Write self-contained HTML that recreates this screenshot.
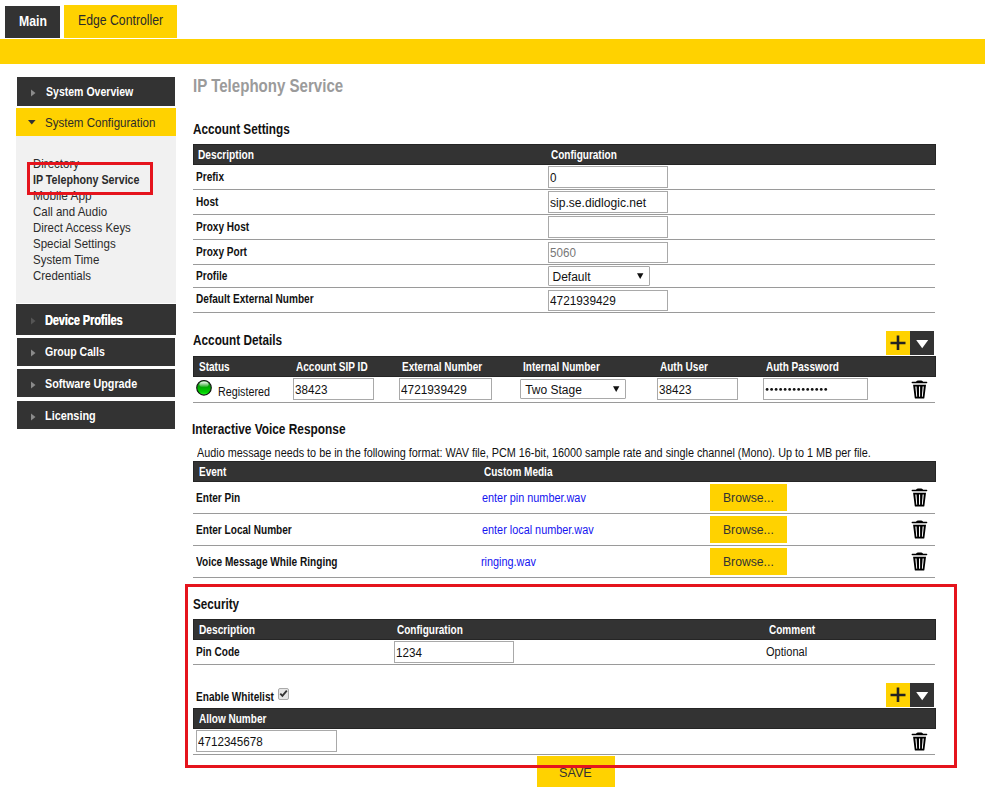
<!DOCTYPE html>
<html><head><meta charset="utf-8"><title>IP Telephony Service</title>
<style>
html,body{margin:0;padding:0;background:#fff;}
body{width:985px;height:797px;position:relative;overflow:hidden;font-family:"Liberation Sans",sans-serif;}
.r{position:absolute;}
.t{position:absolute;white-space:nowrap;transform-origin:0 0;}
</style></head><body>
<div class="r" style="left:5px;top:6px;width:55px;height:32px;background:#333333;"></div>
<div class="t" style="left:18.73px;top:14px;font-size:14px;line-height:14px;font-weight:bold;color:#fff;transform:scaleX(0.8760);">Main</div>
<div class="r" style="left:64px;top:5px;width:113px;height:33px;background:#ffd200;"></div>
<div class="t" style="left:77.62px;top:12.5px;font-size:14px;line-height:14px;color:#2b2b2b;transform:scaleX(0.8750);">Edge Controller</div>
<div class="r" style="left:0px;top:39px;width:985px;height:25px;background:#ffd200;"></div>
<div class="r" style="left:17px;top:77px;width:158px;height:29px;background:#333333;"></div>
<svg class="r" style="left:31px;top:88.7px" width="5" height="8" viewBox="0 0 5 8"><path d="M0 0.5L4.5 4L0 7.5Z" fill="#8a8a8a"/></svg>
<div class="t" style="left:45.7px;top:85.3px;font-size:13px;line-height:13px;font-weight:bold;color:#fff;transform:scaleX(0.8102);">System Overview</div>
<div class="r" style="left:16px;top:108px;width:160px;height:28px;background:#ffd200;"></div>
<svg class="r" style="left:27.8px;top:120.3px" width="8" height="5" viewBox="0 0 8 5"><path d="M0 0H7.6L3.8 4.6Z" fill="#333"/></svg>
<div class="t" style="left:44.75px;top:116px;font-size:13px;line-height:13px;color:#2b2b2b;transform:scaleX(0.8880);">System Configuration</div>
<div class="r" style="left:16px;top:136px;width:160px;height:166.5px;background:#f1f1f1;"></div>
<div class="t" style="left:32.62px;top:157px;font-size:13px;line-height:13px;color:#2b2b2b;transform:scaleX(0.8843);">Directory</div>
<div class="t" style="left:32.78px;top:173px;font-size:13px;line-height:13px;font-weight:bold;color:#2b2b2b;transform:scaleX(0.8218);">IP Telephony Service</div>
<div class="t" style="left:32.59px;top:189px;font-size:13px;line-height:13px;color:#2b2b2b;transform:scaleX(0.9113);">Mobile App</div>
<div class="t" style="left:32.95px;top:205px;font-size:13px;line-height:13px;color:#2b2b2b;transform:scaleX(0.8834);">Call and Audio</div>
<div class="t" style="left:32.62px;top:221px;font-size:13px;line-height:13px;color:#2b2b2b;transform:scaleX(0.8793);">Direct Access Keys</div>
<div class="t" style="left:32.95px;top:237px;font-size:13px;line-height:13px;color:#2b2b2b;transform:scaleX(0.8868);">Special Settings</div>
<div class="t" style="left:32.95px;top:253px;font-size:13px;line-height:13px;color:#2b2b2b;transform:scaleX(0.8826);">System Time</div>
<div class="t" style="left:32.95px;top:269px;font-size:13px;line-height:13px;color:#2b2b2b;transform:scaleX(0.8820);">Credentials</div>
<div class="r" style="left:16px;top:304px;width:160px;height:30.5px;background:#333333;"></div>
<svg class="r" style="left:31px;top:316.5px" width="5" height="8" viewBox="0 0 5 8"><path d="M0 0.5L4.5 4L0 7.5Z" fill="#555"/></svg>
<div class="t" style="left:45.02px;top:313px;font-size:14px;line-height:14px;font-weight:bold;color:#fff;transform:scaleX(0.7717);text-shadow:0.3px 0 0 #fff;">Device Profiles</div>
<div class="r" style="left:17px;top:337.5px;width:158px;height:28px;background:#333333;"></div>
<svg class="r" style="left:31px;top:349px" width="5" height="8" viewBox="0 0 5 8"><path d="M0 0.5L4.5 4L0 7.5Z" fill="#8a8a8a"/></svg>
<div class="t" style="left:45.29px;top:344.8px;font-size:13px;line-height:13px;font-weight:bold;color:#fff;transform:scaleX(0.8124);">Group Calls</div>
<div class="r" style="left:17px;top:369.3px;width:158px;height:28px;background:#333333;"></div>
<svg class="r" style="left:31px;top:380.8px" width="5" height="8" viewBox="0 0 5 8"><path d="M0 0.5L4.5 4L0 7.5Z" fill="#8a8a8a"/></svg>
<div class="t" style="left:45.39px;top:376.9px;font-size:13px;line-height:13px;font-weight:bold;color:#fff;transform:scaleX(0.8281);">Software Upgrade</div>
<div class="r" style="left:17px;top:401.3px;width:158px;height:28px;background:#333333;"></div>
<svg class="r" style="left:31px;top:412.8px" width="5" height="8" viewBox="0 0 5 8"><path d="M0 0.5L4.5 4L0 7.5Z" fill="#8a8a8a"/></svg>
<div class="t" style="left:44.97px;top:408.8px;font-size:13px;line-height:13px;font-weight:bold;color:#fff;transform:scaleX(0.8356);">Licensing</div>
<div class="r" style="left:27px;top:162px;width:126px;height:33px;box-sizing:border-box;border:3px solid #e5141d"></div>
<div class="t" style="left:193.01px;top:76px;font-size:19px;line-height:19px;font-weight:bold;color:#9b9b9b;transform:scaleX(0.7931);">IP Telephony Service</div>
<div class="t" style="left:192.68px;top:121.7px;font-size:14px;line-height:14px;font-weight:bold;color:#111;transform:scaleX(0.8403);">Account Settings</div>
<div class="r" style="left:193px;top:144px;width:743px;height:21px;background:#333333;box-shadow:inset 0 0 0 1px #252525;"></div>
<div class="t" style="left:198.36px;top:149.2px;font-size:12px;line-height:12px;font-weight:bold;color:#fff;transform:scaleX(0.8481);">Description</div>
<div class="t" style="left:550.68px;top:149px;font-size:12px;line-height:12px;font-weight:bold;color:#fff;transform:scaleX(0.8361);">Configuration</div>
<div class="t" style="left:195.67px;top:171px;font-size:12px;line-height:12px;font-weight:bold;color:#111;transform:scaleX(0.8400);">Prefix</div>
<div class="r" style="left:193px;top:189px;width:742px;height:1px;background:#9a9a9a;"></div>
<div class="t" style="left:195.67px;top:195.8px;font-size:12px;line-height:12px;font-weight:bold;color:#111;transform:scaleX(0.8400);">Host</div>
<div class="r" style="left:193px;top:214px;width:742px;height:1px;background:#9a9a9a;"></div>
<div class="t" style="left:195.67px;top:220.6px;font-size:12px;line-height:12px;font-weight:bold;color:#111;transform:scaleX(0.8400);">Proxy Host</div>
<div class="r" style="left:193px;top:239px;width:742px;height:1px;background:#9a9a9a;"></div>
<div class="t" style="left:195.67px;top:245.7px;font-size:12px;line-height:12px;font-weight:bold;color:#111;transform:scaleX(0.8400);">Proxy Port</div>
<div class="r" style="left:193px;top:264px;width:742px;height:1px;background:#9a9a9a;"></div>
<div class="t" style="left:195.67px;top:269.6px;font-size:12px;line-height:12px;font-weight:bold;color:#111;transform:scaleX(0.8400);">Profile</div>
<div class="r" style="left:193px;top:287px;width:742px;height:1px;background:#9a9a9a;"></div>
<div class="t" style="left:195.67px;top:293.4px;font-size:12px;line-height:12px;font-weight:bold;color:#111;transform:scaleX(0.8400);">Default External Number</div>
<div class="r" style="left:193px;top:312px;width:742px;height:1px;background:#9a9a9a;"></div>
<div class="r" style="left:548px;top:166px;width:120px;height:22px;box-sizing:border-box;border:1px solid #a9a9a9;background:#fff"></div>
<div class="t" style="left:550.01px;top:171.5px;font-size:12px;line-height:12px;color:#111;transform:scaleX(0.9700);">0</div>
<div class="r" style="left:548px;top:191px;width:120px;height:22px;box-sizing:border-box;border:1px solid #a9a9a9;background:#fff"></div>
<div class="t" style="left:550.32px;top:196.5px;font-size:12px;line-height:12px;color:#111;transform:scaleX(1.0076);">sip.se.didlogic.net</div>
<div class="r" style="left:548px;top:216px;width:120px;height:22px;box-sizing:border-box;border:1px solid #a9a9a9;background:#fff"></div>
<div class="r" style="left:548px;top:241.5px;width:120px;height:21px;box-sizing:border-box;border:1px solid #a9a9a9;background:#fff"></div>
<div class="t" style="left:550.01px;top:246.5px;font-size:12px;line-height:12px;color:#777;transform:scaleX(0.9700);">5060</div>
<div class="r" style="left:548px;top:266px;width:102px;height:20px;box-sizing:border-box;border:1px solid #a9a9a9;border-radius:1px;background:#fff"></div>
<div class="t" style="left:552.5px;top:271px;font-size:12px;line-height:12px;color:#111;">Default</div>
<svg class="r" style="left:637.2px;top:272.8px" width="7" height="7" viewBox="0 0 7 7"><path d="M0 0.3H6.4L3.2 6.1Z" fill="#111"/></svg>
<div class="r" style="left:548px;top:289.5px;width:120px;height:21.5px;box-sizing:border-box;border:1px solid #a9a9a9;background:#fff"></div>
<div class="t" style="left:549.95px;top:294.6px;font-size:12px;line-height:12px;color:#111;transform:scaleX(0.9848);">4721939429</div>
<div class="t" style="left:192.68px;top:333px;font-size:14px;line-height:14px;font-weight:bold;color:#111;transform:scaleX(0.8429);">Account Details</div>
<div class="r" style="left:886px;top:331px;width:24px;height:24px;background:#ffd200;"></div>
<div class="r" style="left:910px;top:331px;width:24px;height:24px;background:#333;"></div>
<svg class="r" style="left:886px;top:331px" width="48" height="24" viewBox="0 0 48 24"><path d="M4.5 12H19.5M12 4.5V19" stroke="#222" stroke-width="2.6"/><path d="M30.2 9H42.2L36.2 17.3Z" fill="#fff"/></svg>
<div class="r" style="left:193px;top:356px;width:743px;height:21px;background:#333333;box-shadow:inset 0 0 0 1px #252525;"></div>
<div class="t" style="left:199.09px;top:361.3px;font-size:12px;line-height:12px;font-weight:bold;color:#fff;transform:scaleX(0.8350);">Status</div>
<div class="t" style="left:296.09px;top:361.3px;font-size:12px;line-height:12px;font-weight:bold;color:#fff;transform:scaleX(0.8350);">Account SIP ID</div>
<div class="t" style="left:401.97px;top:361.3px;font-size:12px;line-height:12px;font-weight:bold;color:#fff;transform:scaleX(0.8350);">External Number</div>
<div class="t" style="left:523.37px;top:361.3px;font-size:12px;line-height:12px;font-weight:bold;color:#fff;transform:scaleX(0.8350);">Internal Number</div>
<div class="t" style="left:660.39px;top:361.3px;font-size:12px;line-height:12px;font-weight:bold;color:#fff;transform:scaleX(0.8350);">Auth User</div>
<div class="t" style="left:766.39px;top:361.3px;font-size:12px;line-height:12px;font-weight:bold;color:#fff;transform:scaleX(0.8350);">Auth Password</div>
<svg class="r" style="left:194px;top:378px" width="20" height="20" viewBox="0 0 20 20"><defs><linearGradient id="gg" x1="0" y1="0" x2="0" y2="1"><stop offset="0" stop-color="#2f8f2f"/><stop offset="0.45" stop-color="#00a800"/><stop offset="0.8" stop-color="#00d000"/><stop offset="1" stop-color="#30ff30"/></linearGradient><linearGradient id="gh" x1="0" y1="0" x2="0" y2="1"><stop offset="0" stop-color="#fff" stop-opacity="0.95"/><stop offset="1" stop-color="#fff" stop-opacity="0"/></linearGradient></defs><circle cx="10" cy="9.8" r="7.3" fill="url(#gg)" stroke="#111" stroke-width="1.1"/><ellipse cx="10" cy="6.6" rx="4.6" ry="3" fill="url(#gh)"/></svg>
<div class="t" style="left:217.71px;top:385.7px;font-size:12px;line-height:12px;color:#111;transform:scaleX(0.8942);">Registered</div>
<div class="r" style="left:293px;top:378px;width:81px;height:21.5px;box-sizing:border-box;border:1px solid #a9a9a9;background:#fff"></div>
<div class="t" style="left:295.22px;top:383.5px;font-size:12px;line-height:12px;color:#111;transform:scaleX(0.9699);">38423</div>
<div class="r" style="left:399px;top:378px;width:93px;height:21.5px;box-sizing:border-box;border:1px solid #a9a9a9;background:#fff"></div>
<div class="t" style="left:401.25px;top:383.5px;font-size:12px;line-height:12px;color:#111;transform:scaleX(0.9848);">4721939429</div>
<div class="r" style="left:520px;top:379px;width:106px;height:20px;box-sizing:border-box;border:1px solid #a9a9a9;border-radius:1px;background:#fff"></div>
<div class="t" style="left:525.15px;top:384px;font-size:12px;line-height:12px;color:#111;">Two Stage</div>
<svg class="r" style="left:613.2px;top:385.8px" width="7" height="7" viewBox="0 0 7 7"><path d="M0 0.3H6.4L3.2 6.1Z" fill="#111"/></svg>
<div class="r" style="left:657px;top:378px;width:81px;height:21.5px;box-sizing:border-box;border:1px solid #a9a9a9;background:#fff"></div>
<div class="t" style="left:659.22px;top:383.5px;font-size:12px;line-height:12px;color:#111;transform:scaleX(0.9699);">38423</div>
<div class="r" style="left:763px;top:378px;width:105px;height:21.5px;box-sizing:border-box;border:1px solid #a9a9a9;background:#fff"></div>
<svg class="r" style="left:760px;top:380px" width="80" height="18" viewBox="0 0 80 18"><circle cx="7.10" cy="9.4" r="1.4" fill="#111"/><circle cx="11.61" cy="9.4" r="1.4" fill="#111"/><circle cx="16.12" cy="9.4" r="1.4" fill="#111"/><circle cx="20.63" cy="9.4" r="1.4" fill="#111"/><circle cx="25.14" cy="9.4" r="1.4" fill="#111"/><circle cx="29.65" cy="9.4" r="1.4" fill="#111"/><circle cx="34.16" cy="9.4" r="1.4" fill="#111"/><circle cx="38.67" cy="9.4" r="1.4" fill="#111"/><circle cx="43.18" cy="9.4" r="1.4" fill="#111"/><circle cx="47.69" cy="9.4" r="1.4" fill="#111"/><circle cx="52.20" cy="9.4" r="1.4" fill="#111"/><circle cx="56.71" cy="9.4" r="1.4" fill="#111"/><circle cx="61.22" cy="9.4" r="1.4" fill="#111"/><circle cx="65.73" cy="9.4" r="1.4" fill="#111"/></svg>
<svg class="r" style="left:906px;top:376.4px" width="26" height="26" viewBox="0 0 26 26"><path d="M9.8 6.2Q10.5 4.4 11.8 4.4H15.3Q16.6 4.4 17.3 6.2Z" fill="#000"/><rect x="5.6" y="5.8" width="15.7" height="1.5" rx="0.7" fill="#000"/><path d="M7.1 8.7H20L18.4 21.7Q18.3 22.6 17.5 22.6H9.6Q8.8 22.6 8.7 21.7Z" fill="#000"/><path d="M9.3 10.6Q9.9 10.2 10.5 10.6L11.2 20.4Q10.75 21 10.3 20.4Z" fill="#fff"/><path d="M13.0 10.6Q13.55 10.2 14.1 10.6V20.4Q13.55 21 13.0 20.4Z" fill="#fff"/><path d="M17.8 10.6Q17.2 10.2 16.6 10.6L15.9 20.4Q16.35 21 16.8 20.4Z" fill="#fff"/></svg>
<div class="r" style="left:193px;top:402px;width:742px;height:1px;background:#9a9a9a;"></div>
<div class="t" style="left:192.26px;top:422px;font-size:14px;line-height:14px;font-weight:bold;color:#111;transform:scaleX(0.8478);">Interactive Voice Response</div>
<div class="t" style="left:196.6px;top:447.1px;font-size:12px;line-height:12px;color:#111;transform:scaleX(0.9019);">Audio message needs to be in the following format: WAV file, PCM 16-bit, 16000 sample rate and single channel (Mono). Up to 1 MB per file.</div>
<div class="r" style="left:193px;top:461px;width:743px;height:21px;background:#333333;box-shadow:inset 0 0 0 1px #252525;"></div>
<div class="t" style="left:198.97px;top:466.4px;font-size:12px;line-height:12px;font-weight:bold;color:#fff;transform:scaleX(0.8350);">Event</div>
<div class="t" style="left:483.78px;top:466.4px;font-size:12px;line-height:12px;font-weight:bold;color:#fff;transform:scaleX(0.8350);">Custom Media</div>
<div class="t" style="left:195.67px;top:492.4px;font-size:12px;line-height:12px;font-weight:bold;color:#111;transform:scaleX(0.8400);">Enter Pin</div>
<div class="t" style="left:481.55px;top:492.1px;font-size:12px;line-height:12px;color:#1515f0;transform:scaleX(0.9050);">enter pin number.wav</div>
<div class="r" style="left:710px;top:484px;width:77px;height:27px;background:#ffd200;"></div>
<div class="t" style="left:723.08px;top:491.5px;font-size:12px;line-height:12px;color:#333;transform:scaleX(1.0151);">Browse...</div>
<svg class="r" style="left:906px;top:484.1px" width="26" height="26" viewBox="0 0 26 26"><path d="M9.8 6.2Q10.5 4.4 11.8 4.4H15.3Q16.6 4.4 17.3 6.2Z" fill="#000"/><rect x="5.6" y="5.8" width="15.7" height="1.5" rx="0.7" fill="#000"/><path d="M7.1 8.7H20L18.4 21.7Q18.3 22.6 17.5 22.6H9.6Q8.8 22.6 8.7 21.7Z" fill="#000"/><path d="M9.3 10.6Q9.9 10.2 10.5 10.6L11.2 20.4Q10.75 21 10.3 20.4Z" fill="#fff"/><path d="M13.0 10.6Q13.55 10.2 14.1 10.6V20.4Q13.55 21 13.0 20.4Z" fill="#fff"/><path d="M17.8 10.6Q17.2 10.2 16.6 10.6L15.9 20.4Q16.35 21 16.8 20.4Z" fill="#fff"/></svg>
<div class="r" style="left:193px;top:513px;width:742px;height:1px;background:#9a9a9a;"></div>
<div class="t" style="left:195.67px;top:524.4px;font-size:12px;line-height:12px;font-weight:bold;color:#111;transform:scaleX(0.8400);">Enter Local Number</div>
<div class="t" style="left:481.55px;top:524.1px;font-size:12px;line-height:12px;color:#1515f0;transform:scaleX(0.9050);">enter local number.wav</div>
<div class="r" style="left:710px;top:516px;width:77px;height:27px;background:#ffd200;"></div>
<div class="t" style="left:723.08px;top:523.5px;font-size:12px;line-height:12px;color:#333;transform:scaleX(1.0151);">Browse...</div>
<svg class="r" style="left:906px;top:516.1px" width="26" height="26" viewBox="0 0 26 26"><path d="M9.8 6.2Q10.5 4.4 11.8 4.4H15.3Q16.6 4.4 17.3 6.2Z" fill="#000"/><rect x="5.6" y="5.8" width="15.7" height="1.5" rx="0.7" fill="#000"/><path d="M7.1 8.7H20L18.4 21.7Q18.3 22.6 17.5 22.6H9.6Q8.8 22.6 8.7 21.7Z" fill="#000"/><path d="M9.3 10.6Q9.9 10.2 10.5 10.6L11.2 20.4Q10.75 21 10.3 20.4Z" fill="#fff"/><path d="M13.0 10.6Q13.55 10.2 14.1 10.6V20.4Q13.55 21 13.0 20.4Z" fill="#fff"/><path d="M17.8 10.6Q17.2 10.2 16.6 10.6L15.9 20.4Q16.35 21 16.8 20.4Z" fill="#fff"/></svg>
<div class="r" style="left:193px;top:545px;width:742px;height:1px;background:#9a9a9a;"></div>
<div class="t" style="left:196.2px;top:556.4px;font-size:12px;line-height:12px;font-weight:bold;color:#111;transform:scaleX(0.8400);">Voice Message While Ringing</div>
<div class="t" style="left:481.32px;top:556.1px;font-size:12px;line-height:12px;color:#1515f0;transform:scaleX(0.9050);">ringing.wav</div>
<div class="r" style="left:710px;top:548px;width:77px;height:27px;background:#ffd200;"></div>
<div class="t" style="left:723.08px;top:555.5px;font-size:12px;line-height:12px;color:#333;transform:scaleX(1.0151);">Browse...</div>
<svg class="r" style="left:906px;top:548.1px" width="26" height="26" viewBox="0 0 26 26"><path d="M9.8 6.2Q10.5 4.4 11.8 4.4H15.3Q16.6 4.4 17.3 6.2Z" fill="#000"/><rect x="5.6" y="5.8" width="15.7" height="1.5" rx="0.7" fill="#000"/><path d="M7.1 8.7H20L18.4 21.7Q18.3 22.6 17.5 22.6H9.6Q8.8 22.6 8.7 21.7Z" fill="#000"/><path d="M9.3 10.6Q9.9 10.2 10.5 10.6L11.2 20.4Q10.75 21 10.3 20.4Z" fill="#fff"/><path d="M13.0 10.6Q13.55 10.2 14.1 10.6V20.4Q13.55 21 13.0 20.4Z" fill="#fff"/><path d="M17.8 10.6Q17.2 10.2 16.6 10.6L15.9 20.4Q16.35 21 16.8 20.4Z" fill="#fff"/></svg>
<div class="r" style="left:193px;top:577px;width:742px;height:1px;background:#9a9a9a;"></div>
<div class="t" style="left:192.89px;top:596.6px;font-size:14px;line-height:14px;font-weight:bold;color:#111;transform:scaleX(0.8340);">Security</div>
<div class="r" style="left:193px;top:619px;width:743px;height:21px;background:#333333;box-shadow:inset 0 0 0 1px #252525;"></div>
<div class="t" style="left:199.16px;top:624px;font-size:12px;line-height:12px;font-weight:bold;color:#fff;transform:scaleX(0.8481);">Description</div>
<div class="t" style="left:396.98px;top:624px;font-size:12px;line-height:12px;font-weight:bold;color:#fff;transform:scaleX(0.8361);">Configuration</div>
<div class="t" style="left:768.78px;top:624px;font-size:12px;line-height:12px;font-weight:bold;color:#fff;transform:scaleX(0.8350);">Comment</div>
<div class="t" style="left:195.87px;top:645.6px;font-size:12px;line-height:12px;font-weight:bold;color:#111;transform:scaleX(0.8400);">Pin Code</div>
<div class="r" style="left:394px;top:641px;width:120px;height:21.5px;box-sizing:border-box;border:1px solid #a9a9a9;background:#fff"></div>
<div class="t" style="left:395.65px;top:646.5px;font-size:12px;line-height:12px;color:#111;transform:scaleX(0.9700);">1234</div>
<div class="t" style="left:765.94px;top:645.9px;font-size:12px;line-height:12px;color:#111;transform:scaleX(0.9200);">Optional</div>
<div class="r" style="left:193px;top:664px;width:742px;height:1px;background:#9a9a9a;"></div>
<div class="t" style="left:195.77px;top:691px;font-size:12px;line-height:12px;font-weight:bold;color:#111;transform:scaleX(0.8400);">Enable Whitelist</div>
<div class="r" style="left:277.5px;top:688px;width:11px;height:11.5px;box-sizing:border-box;border:1px solid #aaa;border-radius:2px;background:#e6e6e6"></div>
<svg class="r" style="left:278px;top:688px" width="11" height="11" viewBox="0 0 11 11"><path d="M2.3 5.6L4.4 7.8L8.8 2.6" stroke="#333" stroke-width="1.8" fill="none"/></svg>
<div class="r" style="left:886px;top:683px;width:24px;height:24px;background:#ffd200;"></div>
<div class="r" style="left:910px;top:683px;width:24px;height:24px;background:#333;"></div>
<svg class="r" style="left:886px;top:683px" width="48" height="24" viewBox="0 0 48 24"><path d="M4.5 12H19.5M12 4.5V19" stroke="#222" stroke-width="2.6"/><path d="M30.2 9H42.2L36.2 17.3Z" fill="#fff"/></svg>
<div class="r" style="left:193px;top:708px;width:743px;height:21px;background:#333333;box-shadow:inset 0 0 0 1px #252525;"></div>
<div class="t" style="left:199.39px;top:713px;font-size:12px;line-height:12px;font-weight:bold;color:#fff;transform:scaleX(0.8350);">Allow Number</div>
<div class="r" style="left:196px;top:730px;width:141px;height:21.5px;box-sizing:border-box;border:1px solid #a9a9a9;background:#fff"></div>
<div class="t" style="left:198.26px;top:735.5px;font-size:12px;line-height:12px;color:#111;transform:scaleX(0.9700);">4712345678</div>
<svg class="r" style="left:906px;top:728.2px" width="26" height="26" viewBox="0 0 26 26"><path d="M9.8 6.2Q10.5 4.4 11.8 4.4H15.3Q16.6 4.4 17.3 6.2Z" fill="#000"/><rect x="5.6" y="5.8" width="15.7" height="1.5" rx="0.7" fill="#000"/><path d="M7.1 8.7H20L18.4 21.7Q18.3 22.6 17.5 22.6H9.6Q8.8 22.6 8.7 21.7Z" fill="#000"/><path d="M9.3 10.6Q9.9 10.2 10.5 10.6L11.2 20.4Q10.75 21 10.3 20.4Z" fill="#fff"/><path d="M13.0 10.6Q13.55 10.2 14.1 10.6V20.4Q13.55 21 13.0 20.4Z" fill="#fff"/><path d="M17.8 10.6Q17.2 10.2 16.6 10.6L15.9 20.4Q16.35 21 16.8 20.4Z" fill="#fff"/></svg>
<div class="r" style="left:193px;top:754px;width:742px;height:1px;background:#9a9a9a;"></div>
<div class="r" style="left:537px;top:756px;width:78px;height:31px;background:#ffd200;"></div>
<div class="t" style="left:559.39px;top:765.8px;font-size:13px;line-height:13px;color:#333;transform:scaleX(0.9723);">SAVE</div>
<div class="r" style="left:185px;top:584px;width:772px;height:184px;box-sizing:border-box;border:3px solid #e5141d"></div>
</body></html>
